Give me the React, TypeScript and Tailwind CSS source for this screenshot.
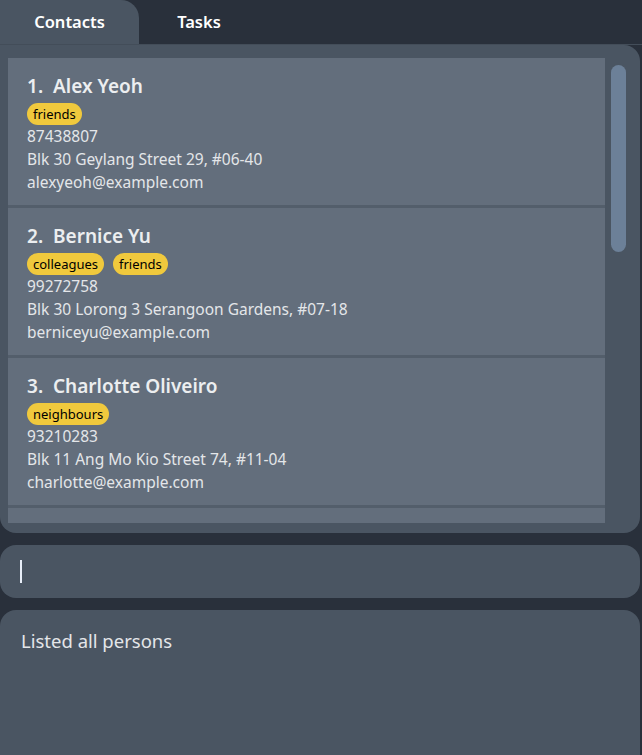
import React from 'react';

type Person = {
  name: string;
  tags: string[];
  phone: string;
  address: string;
  email: string;
};

const PERSONS: Person[] = [
  { name: 'Alex Yeoh', tags: ['friends'], phone: '87438807', address: 'Blk 30 Geylang Street 29, #06-40', email: 'alexyeoh@example.com' },
  { name: 'Bernice Yu', tags: ['colleagues', 'friends'], phone: '99272758', address: 'Blk 30 Lorong 3 Serangoon Gardens, #07-18', email: 'berniceyu@example.com' },
  { name: 'Charlotte Oliveiro', tags: ['neighbours'], phone: '93210283', address: 'Blk 11 Ang Mo Kio Street 74, #11-04', email: 'charlotte@example.com' },
];

function PersonCard({ person, index }: { person: Person; index: number }) {
  return (
    <div className="h-[150px] shrink-0 bg-[#636e7c] border-b-[3px] border-[#535e6b] pl-[19px] pt-[16px] text-[#e4e6e9]">
      <div className="text-[19px] leading-[24px] font-semibold whitespace-pre text-[#eceef0]">
        {index + 1}.  {person.name}
      </div>
      <div className="flex gap-[9px] mt-[5px]">
        {person.tags.map(t => (
          <span key={t} className="h-[22px] leading-[22px] px-[6px] rounded-[11px] bg-[#f0c93d] text-black text-[13px]">
            {t}
          </span>
        ))}
      </div>
      <div className="text-[15.5px] leading-[23px]">{person.phone}</div>
      <div className="text-[15.5px] leading-[23px]">{person.address}</div>
      <div className="text-[15.5px] leading-[23px]">{person.email}</div>
    </div>
  );
}

export default function App() {
  return (
    <div
      className="w-[642px] h-[755px] bg-[#29303b] flex flex-col overflow-hidden"
      style={{ fontFamily: '"Noto Sans", "Open Sans", sans-serif' }}
    >
      {/* tabs */}
      <div className="h-[45px] flex shrink-0 border-b border-[#434d59]">
        <div className="w-[139px] bg-[#4a5562] rounded-tr-[18px] flex items-center justify-center text-white text-[16.5px] font-semibold">
          Contacts
        </div>
        <div className="w-[120px] flex items-center justify-center text-white text-[16.5px] font-semibold">
          Tasks
        </div>
      </div>

      {/* person list */}
      <div className="h-[488px] w-[640px] shrink-0 bg-[#4a5562] rounded-b-[16px] rounded-tr-[16px] flex pt-[13px] pb-[10px] pl-[8px]">
        <div className="w-[597px] flex flex-col overflow-hidden">
          {PERSONS.map((p, i) => (
            <PersonCard key={p.name} person={p} index={i} />
          ))}
          <div className="h-[40px] shrink-0 bg-[#636e7c]" />
        </div>
        <div className="ml-[6px] pt-[7px]">
          <div className="w-[15px] h-[187px] rounded-full bg-[#6c8098]" />
        </div>
      </div>

      {/* command box */}
      <div className="mt-[12px] h-[53px] w-[640px] shrink-0 bg-[#4a5562] rounded-[16px] flex items-center pl-[20px]">
        <div className="w-[2px] h-[23px] bg-[#e8eef8]" />
      </div>

      {/* result display */}
      <div className="mt-[12px] flex-1 w-[640px] bg-[#4a5562] rounded-t-[16px] px-[21px] pt-[18px]">
        <div className="text-[18.5px] leading-[26px] text-[#e4e6e9]">Listed all persons</div>
      </div>
    </div>
  );
}
